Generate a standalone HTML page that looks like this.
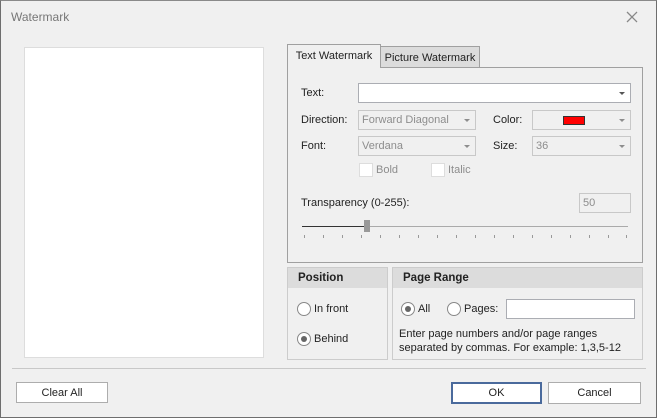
<!DOCTYPE html>
<html><head><style>
*{box-sizing:border-box;margin:0;padding:0}
body{width:657px;height:418px;overflow:hidden;background:#f0f0f0;font-family:"Liberation Sans",sans-serif;font-size:11px;color:#222;position:relative}
.a{position:absolute}
.frame{left:0;top:0;width:657px;height:418px;border:1px solid #6e6e6e;border-top-color:#8a8a8a}
.in{background:#fff;border:1px solid #abadb3}
.dis{background:#f0f0f0;border:1px solid #c8c8c8;color:#8d8d8d;padding:0 3px;line-height:18px}
.arr{position:absolute;right:5px;top:8px;width:0;height:0;border-left:3px solid transparent;border-right:3px solid transparent;border-top:3px solid #8d8d8d}
.btn{background:#fff;border:1px solid #adadad;text-align:center;line-height:20px}
.cb{width:14px;height:14px;border:1px solid #ddd;background:#fff}
.rb{width:14px;height:14px;border:1px solid #888;border-radius:50%;background:#fff}
.rb.on::after{content:"";position:absolute;left:3px;top:3px;width:6px;height:6px;border-radius:50%;background:#666}
.gh{background:#dcdcdc;font-weight:bold;padding-left:10px;line-height:20px;font-size:11.5px}
.tick{position:absolute;top:235px;width:1px;height:3px;background:#999}
</style></head><body>
<div class="a frame"></div>
<div class="a" style="left:11px;top:10px;color:#777;font-size:12px">Watermark</div>
<svg class="a" style="left:626px;top:11px" width="12" height="12"><path d="M1 1L11 11M11 1L1 11" stroke="#888" stroke-width="1.3"/></svg>
<div class="a" style="left:24px;top:47px;width:240px;height:311px;background:#fff;border:1px solid #ddd"></div>

<div class="a" style="left:287px;top:67px;width:356px;height:196px;border:1px solid #a0a0a0"></div>
<div class="a" style="left:380px;top:46px;width:100px;height:22px;background:#dcdcdc;border:1px solid #a0a0a0;text-align:center;line-height:22px;font-size:11px">Picture Watermark</div>
<div class="a" style="left:287px;top:44px;width:94px;height:24px;background:#f0f0f0;border:1px solid #a0a0a0;border-bottom:none;text-align:center;line-height:22px;font-size:11px">Text Watermark</div>

<div class="a" style="left:301px;top:87px">Text:</div>
<div class="a in" style="left:358px;top:83px;width:273px;height:20px"><div class="arr" style="border-top-color:#555"></div></div>
<div class="a" style="left:301px;top:114px">Direction:</div>
<div class="a dis" style="left:358px;top:110px;width:118px;height:20px">Forward Diagonal<div class="arr"></div></div>
<div class="a" style="left:493px;top:114px">Color:</div>
<div class="a dis" style="left:532px;top:110px;width:99px;height:20px"><div class="a" style="left:30px;top:5px;width:22px;height:9px;background:#f00;border:1px solid #333"></div><div class="arr"></div></div>
<div class="a" style="left:301px;top:140px">Font:</div>
<div class="a dis" style="left:358px;top:136px;width:118px;height:20px">Verdana<div class="arr"></div></div>
<div class="a" style="left:493px;top:140px">Size:</div>
<div class="a dis" style="left:532px;top:136px;width:99px;height:20px">36<div class="arr"></div></div>
<div class="a cb" style="left:359px;top:163px"></div><div class="a" style="left:376px;top:164px;color:#8d8d8d">Bold</div>
<div class="a cb" style="left:431px;top:163px"></div><div class="a" style="left:448px;top:164px;color:#8d8d8d">Italic</div>
<div class="a" style="left:301px;top:197px">Transparency (0-255):</div>
<div class="a dis" style="left:579px;top:193px;width:52px;height:20px">50</div>
<div class="a" style="left:302px;top:226px;width:326px;height:1px;background:#aaa"></div>
<div class="a" style="left:302px;top:226px;width:63px;height:1px;background:#333"></div>
<div class="a" style="left:364px;top:220px;width:6px;height:12px;background:#999"></div>
<div class="tick" style="left:304px"></div><div class="tick" style="left:323px"></div><div class="tick" style="left:342px"></div><div class="tick" style="left:361px"></div><div class="tick" style="left:380px"></div><div class="tick" style="left:399px"></div><div class="tick" style="left:418px"></div><div class="tick" style="left:437px"></div><div class="tick" style="left:456px"></div><div class="tick" style="left:475px"></div><div class="tick" style="left:494px"></div><div class="tick" style="left:513px"></div><div class="tick" style="left:532px"></div><div class="tick" style="left:551px"></div><div class="tick" style="left:570px"></div><div class="tick" style="left:589px"></div><div class="tick" style="left:608px"></div><div class="tick" style="left:626px"></div>

<div class="a" style="left:287px;top:267px;width:101px;height:93px;border:1px solid #ccc"><div class="gh">Position</div></div>
<div class="a rb" style="left:297px;top:302px"></div><div class="a" style="left:314px;top:303px">In front</div>
<div class="a rb on" style="left:297px;top:332px"></div><div class="a" style="left:314px;top:333px">Behind</div>
<div class="a" style="left:392px;top:267px;width:251px;height:93px;border:1px solid #ccc"><div class="gh">Page Range</div></div>
<div class="a rb on" style="left:401px;top:302px"></div><div class="a" style="left:418px;top:303px">All</div>
<div class="a rb" style="left:447px;top:302px"></div><div class="a" style="left:464px;top:303px">Pages:</div>
<div class="a in" style="left:506px;top:299px;width:129px;height:20px"></div>
<div class="a" style="left:399px;top:327px;line-height:14px">Enter page numbers and/or page ranges<br>separated by commas. For example: 1,3,5-12</div>

<div class="a" style="left:12px;top:368px;width:634px;height:1px;background:#c8c8c8"></div>
<div class="a btn" style="left:16px;top:382px;width:92px;height:21px">Clear All</div>
<div class="a btn" style="left:451px;top:382px;width:91px;height:22px;border:2px solid #4a6a9c;line-height:19px">OK</div>
<div class="a btn" style="left:548px;top:382px;width:93px;height:22px">Cancel</div>
</body></html>
